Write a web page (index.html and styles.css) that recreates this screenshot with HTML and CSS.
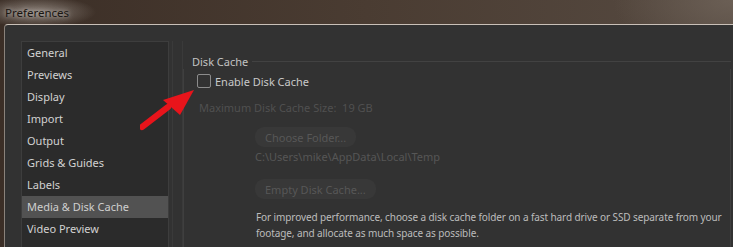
FILE: index.html
```html
<!DOCTYPE html>
<html lang="en">
<head>
  <meta charset="UTF-8" />
  <title>Preferences</title>
  <link rel="stylesheet" href="styles.css">
</head>
<body>

  <div class="titlebar">
    <span class="title">Preferences</span>
  </div>

  <div class="window">
    <ul class="nav-list">
      <li>General</li>
      <li>Previews</li>
      <li>Display</li>
      <li>Import</li>
      <li>Output</li>
      <li>Grids &amp; Guides</li>
      <li>Labels</li>
      <li class="active">Media &amp; Disk Cache</li>
      <li>Video Preview</li>
      <li>Sync</li>
    </ul>
    <div class="splitter"></div>

    <div class="content">
      <div class="group-head">
        <span class="tick"></span>
        <span class="group-label">Disk Cache</span>
        <span class="rule"></span>
      </div>
      <div class="group-body">
        <label class="check-row">
          <span class="checkbox"></span>
          <span>Enable Disk Cache</span>
        </label>
        <div class="size-row">Maximum Disk Cache Size:&nbsp;&nbsp;19 GB</div>
        <div class="indent">
          <button class="btn" disabled>Choose Folder...</button>
          <div class="path">C:\Users\mike\AppData\Local\Temp</div>
          <button class="btn btn-empty" disabled>Empty Disk Cache...</button>
          <p class="hint">For improved performance, choose a disk cache folder on a fast hard drive or SSD separate from your footage, and allocate as much space as possible.</p>
        </div>
      </div>
    </div>
  </div>

  <!-- red annotation arrow -->
  <svg class="arrow" width="80" height="60" viewBox="0 0 80 60">
    <path d="M2 51 L28 31" stroke="#e8141b" stroke-width="6" stroke-linecap="round" fill="none"/>
    <polygon points="54,14 23,24 40,39" fill="#e8141b"/>
  </svg>

</body>
</html>
```

FILE: styles.css
```css
* {
  margin: 0;
  padding: 0;
  box-sizing: border-box;
}
body {
  font-family: 'Noto Sans', 'DejaVu Sans', sans-serif;
  font-size: 11px;
  height: 247px;
  overflow: hidden;
  background: linear-gradient(90deg, #3b2e26 0%, #4a3c32 50%, #564a41 100%);
  position: relative;
}
.titlebar {
  height: 24px;
  padding-left: 5px;
  display: flex;
  align-items: center;
  background:
    radial-gradient(ellipse 60px 16px at 36px 12px, rgba(150, 140, 132, 0.85) 0%, rgba(150, 140, 132, 0) 100%),
    radial-gradient(ellipse 120px 60px at 100% 0%, #6b5f55 0%, rgba(107, 95, 85, 0) 100%);
}
.title {
  font-size: 11.5px;
  color: #1a1612;
  text-shadow: 0 0 4px rgba(255, 255, 255, 0.5), 0 0 8px rgba(255, 255, 255, 0.35);
}
.window {
  margin-left: 4px;
  height: 223px;
  background: #323232;
  border-top: 1px solid #c9c0b8;
  border-left: 1px solid #8a827b;
  border-top-left-radius: 4px;
  display: flex;
  padding: 16px 0 0 16px;
}
.nav-list {
  list-style: none;
  width: 148px;
  flex-shrink: 0;
  background: #2b2b2b;
  border: 1px solid #3d3d3d;
  border-bottom: none;
  color: #d2d2d2;
  overflow: hidden;
}
.nav-list li {
  height: 22px;
  line-height: 22px;
  padding-left: 5px;
  white-space: nowrap;
}
.nav-list li.active {
  background: #525252;
  color: #cfcfcf;
}
.splitter {
  width: 11px;
  flex-shrink: 0;
  margin-left: 3px;
  border-left: 1px solid #3a3a3a;
  border-right: 1px solid #3a3a3a;
}
.content {
  flex: 1;
  padding-top: 12px;
  color: #c8c8c8;
}
.group-head {
  display: flex;
  align-items: center;
  height: 16px;
}
.tick {
  width: 8px;
}
.group-label {
  color: #c2c2c2;
  padding: 0 4px 0 1px;
}
.rule {
  flex: 1;
  height: 1px;
  background: #424242;
  margin-right: 2px;
}
.group-body {
  border-left: 1px solid #3f3f3f;
  border-right: 1px solid #3f3f3f;
  margin-right: 2px;
  height: 200px;
  padding: 3px 0 0 13px;
}
.check-row {
  display: flex;
  align-items: center;
  height: 18px;
  color: #c9c9c9;
}
.checkbox {
  width: 14px;
  height: 14px;
  border: 1px solid #8c8c8c;
  border-radius: 2px;
  margin-right: 4px;
}
.size-row {
  margin-top: 9px;
  margin-left: 2px;
  height: 18px;
  line-height: 18px;
  color: #505050;
}
.indent {
  padding-left: 58px;
  padding-top: 10px;
}
.btn {
  display: block;
  font-family: inherit;
  font-size: 11px;
  height: 20px;
  padding: 0 10px;
  border: none;
  border-radius: 9px;
  background: #383838;
  color: #575757;
}
.path {
  color: #565656;
  height: 20px;
  line-height: 20px;
  margin-bottom: 12px;
}
.hint {
  margin-top: 10px;
  margin-left: 1px;
  color: #bcbcbc;
  font-size: 10px;
  letter-spacing: -0.1px;
  line-height: 16px;
  width: 470px;
}
.arrow {
  position: absolute;
  left: 140px;
  top: 76px;
}
```
